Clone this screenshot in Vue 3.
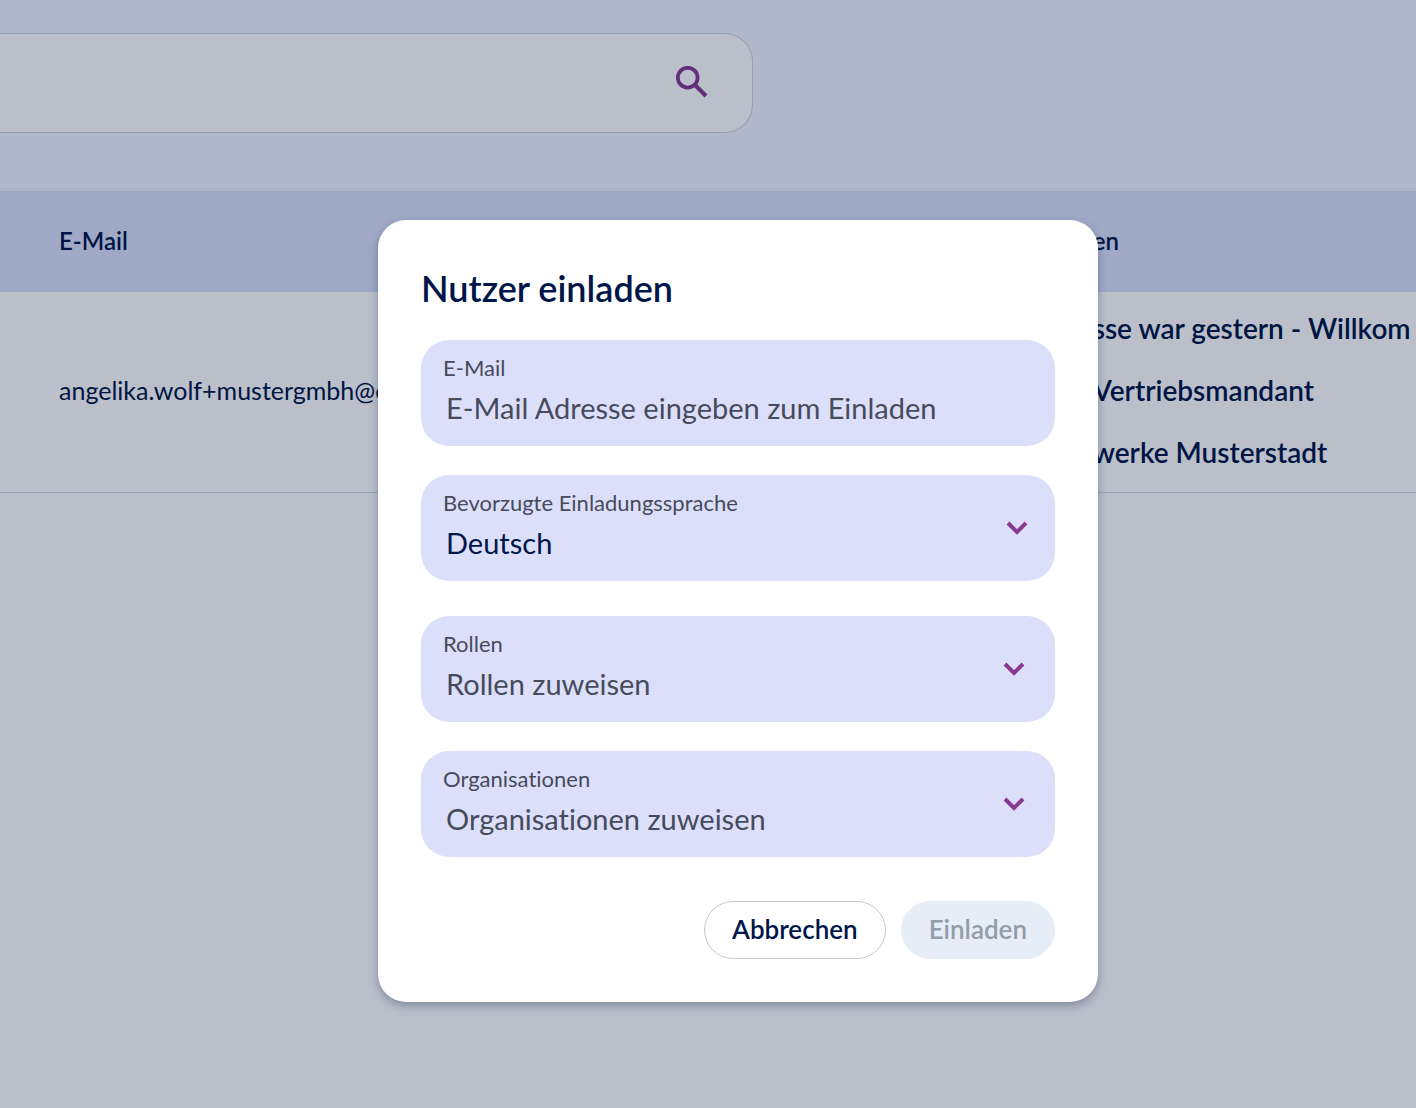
<script setup>
import { ref } from 'vue'

const search = ref('')
const email = ref('')
const language = ref('de')
const role = ref('')
const organisation = ref('')

const users = [
  {
    email: 'angelika.wolf+mustergmbh@e',
    organisations: ['sse war gestern - Willkom', 'Vertriebsmandant', 'werke Musterstadt'],
  },
]
</script>

<template>
  <div class="page">
    <main class="users">
      <div class="toolbar">
        <form class="search" @submit.prevent>
          <input v-model="search" class="search-input" type="search" aria-label="Suche" />
          <button class="search-button" type="submit" aria-label="Suchen">
            <svg viewBox="0 0 32 32" width="32" height="32" fill="none" stroke="currentColor">
              <circle cx="11.7" cy="11.7" r="9.9" stroke-width="3.8" />
              <path d="M19.8 19.8 30 30" stroke-width="4.2" />
            </svg>
          </button>
        </form>
      </div>
      <table class="table">
        <thead>
          <tr>
            <th class="col-email">E-Mail</th>
            <th>en</th>
          </tr>
        </thead>
        <tbody>
          <tr v-for="user in users" :key="user.email">
            <td class="col-email">{{ user.email }}</td>
            <td>
              <ul class="organisations">
                <li v-for="name in user.organisations" :key="name">{{ name }}</li>
              </ul>
            </td>
          </tr>
        </tbody>
      </table>
    </main>

    <div class="overlay">
      <form class="dialog" role="dialog" aria-modal="true" aria-labelledby="dialog-title" @submit.prevent>
        <h2 id="dialog-title" class="title">Nutzer einladen</h2>

        <div class="field">
          <label for="email">E-Mail</label>
          <input id="email" v-model="email" type="email" placeholder="E-Mail Adresse eingeben zum Einladen" />
        </div>

        <div class="field field-language">
          <label for="language">Bevorzugte Einladungssprache</label>
          <select id="language" v-model="language">
            <option value="de">Deutsch</option>
          </select>
          <svg class="chevron" viewBox="0 0 22 14" width="22" height="14">
            <path d="M2 2 11 11 20 2" />
          </svg>
        </div>

        <div class="field">
          <label for="role">Rollen</label>
          <select id="role" v-model="role" class="empty">
            <option value="">Rollen zuweisen</option>
          </select>
          <svg class="chevron" viewBox="0 0 22 14" width="22" height="14">
            <path d="M2 2 11 11 20 2" />
          </svg>
        </div>

        <div class="field">
          <label for="organisation">Organisationen</label>
          <select id="organisation" v-model="organisation" class="empty">
            <option value="">Organisationen zuweisen</option>
          </select>
          <svg class="chevron" viewBox="0 0 22 14" width="22" height="14">
            <path d="M2 2 11 11 20 2" />
          </svg>
        </div>

        <div class="actions">
          <button class="button" type="button">Abbrechen</button>
          <button class="button button-primary" type="submit" disabled>Einladen</button>
        </div>
      </form>
    </div>
  </div>
</template>

<style>
body {
  margin: 0;
}
</style>

<style scoped>
.page {
  position: relative;
  min-height: 100vh;
  overflow: hidden;
  background: #fff;
  color: #001648;
  font-family: Lato, 'Open Sans', sans-serif;
  font-variant-ligatures: none;
}
.page * {
  box-sizing: border-box;
}
input,
select,
button {
  font: inherit;
  color: inherit;
}

.toolbar {
  padding: 33px 0 55px;
  background: #f3f6ff;
  border-bottom: 3px solid #edf1fa;
}
.search {
  display: flex;
  align-items: center;
  width: 53.2%;
  height: 100px;
  padding: 0 44px 2px 0;
  background: #fff;
  border: 1px solid #cbd2de;
  border-left: 0;
  border-radius: 0 28px 28px 0;
}
.search-input {
  flex: 1;
  min-width: 0;
  height: 100%;
  border: 0;
  outline: 0;
  background: none;
  font-size: 28px;
}
.search-button {
  display: flex;
  padding: 0;
  border: 0;
  background: none;
  color: #883a90;
}

.table {
  width: 100%;
  table-layout: fixed;
  border-collapse: collapse;
  text-align: left;
  white-space: nowrap;
}
th,
td {
  padding: 0 0 3px 59px;
}
th {
  height: 101px;
  background: #dbe1fb;
  font-size: 24px;
  font-weight: 600;
}
td {
  height: 200px;
  border-bottom: 1px solid #d4dbe7;
  font-size: 25px;
}
.col-email {
  width: 73%;
}
.organisations {
  display: flex;
  flex-direction: column;
  gap: 26px;
  margin: 0;
  padding: 0;
  list-style: none;
  font-size: 28px;
  line-height: 36px;
  font-weight: 600;
}

.overlay {
  position: absolute;
  inset: 0;
  display: flex;
  align-items: center;
  justify-content: center;
  padding: 114px 0 0 60px;
  background: rgba(1, 18, 56, 0.27);
}
.dialog {
  width: 720px;
  max-width: 100%;
  padding: 43px;
  background: #fff;
  border-radius: 28px;
  box-shadow: 0 4px 10px rgba(0, 22, 72, 0.3);
}
.title {
  margin: 0 0 27px;
  font-size: 36px;
  line-height: 50px;
  font-weight: 600;
}

.field {
  position: relative;
  display: flex;
  flex-direction: column;
  height: 106px;
  margin-bottom: 29px;
  background: #dcdff9;
  border-radius: 28px;
}
.field-language {
  margin-bottom: 35px;
}
.field label {
  padding: 14px 22px 0;
  font-size: 22px;
  line-height: 27px;
  color: #464b5c;
}
.field input,
.field select {
  flex: 1;
  width: 100%;
  padding: 0 25px 12px;
  border: 0;
  outline: 0;
  background: none;
  appearance: none;
  border-radius: 0 0 28px 28px;
  font-size: 29px;
}
.field input::placeholder,
.field .empty {
  color: #464b5c;
  opacity: 1;
}
.chevron {
  position: absolute;
  top: 46px;
  right: 30px;
  fill: none;
  stroke: #883a90;
  stroke-width: 4;
  pointer-events: none;
}
.field-language .chevron {
  right: 27px;
}

.actions {
  display: flex;
  justify-content: flex-end;
  gap: 15px;
  margin-top: 44px;
}
.button {
  height: 58px;
  padding: 0 27px 3px;
  border: 1px solid #c5c8ce;
  border-radius: 29px;
  background: #fff;
  font-size: 26px;
  font-weight: 600;
}
.button-primary {
  border-color: #e7edf6;
  background: #e7edf6;
  color: #929dab;
}
</style>
